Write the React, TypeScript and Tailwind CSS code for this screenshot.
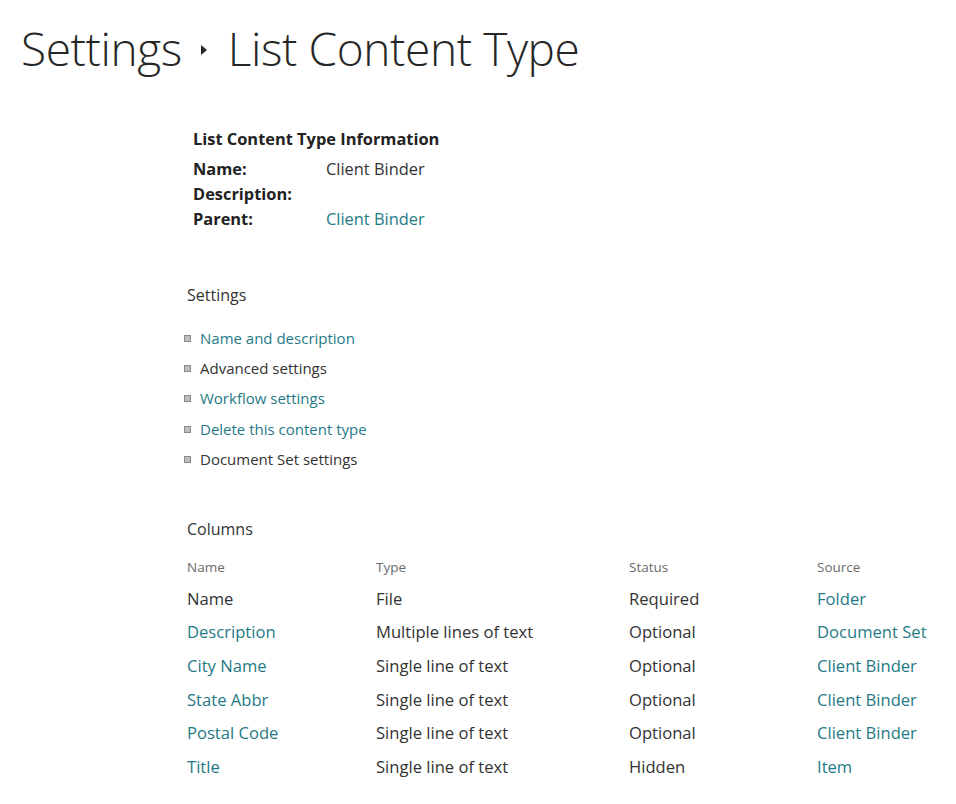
import React from 'react';

const link = 'text-[#1f7a86]';
const dark = 'text-[#333333]';

const settings = [
  { label: 'Name and description', isLink: true },
  { label: 'Advanced settings', isLink: false },
  { label: 'Workflow settings', isLink: true },
  { label: 'Delete this content type', isLink: true },
  { label: 'Document Set settings', isLink: false },
];

const columns = [
  { name: 'Name', nameLink: false, type: 'File', status: 'Required', source: 'Folder' },
  { name: 'Description', nameLink: true, type: 'Multiple lines of text', status: 'Optional', source: 'Document Set' },
  { name: 'City Name', nameLink: true, type: 'Single line of text', status: 'Optional', source: 'Client Binder' },
  { name: 'State Abbr', nameLink: true, type: 'Single line of text', status: 'Optional', source: 'Client Binder' },
  { name: 'Postal Code', nameLink: true, type: 'Single line of text', status: 'Optional', source: 'Client Binder' },
  { name: 'Title', nameLink: true, type: 'Single line of text', status: 'Hidden', source: 'Item' },
];

export default function App() {
  return (
    <div className={`w-[956px] h-[804px] overflow-hidden bg-white ${dark} font-['Open_Sans','Noto_Sans',sans-serif]`}>
      {/* page title */}
      <h1 className="flex items-center pl-[21px] pt-[30px] h-[66px] text-[46px] font-light leading-none tracking-[-0.4px] text-[#262626]">
        <span>Settings</span>
        <span className="ml-[19px] mr-[21px] inline-block w-0 h-0 border-y-[5px] border-y-transparent border-l-[6px] border-l-[#262626] mt-[4px]" />
        <span>List Content Type</span>
      </h1>

      {/* information */}
      <div className="ml-[193px] mt-[62px] text-[16.4px]">
        <div className="font-bold leading-[22px] text-[#222]">List Content Type Information</div>
        <div className="mt-[6px] grid grid-cols-[133px_1fr] leading-[25px]">
          <div className="font-bold text-[#222]">Name:</div>
          <div>Client Binder</div>
          <div className="font-bold text-[#222]">Description:</div>
          <div />
          <div className="font-bold text-[#222]">Parent:</div>
          <div className={link}>Client Binder</div>
        </div>
      </div>

      {/* settings */}
      <div className="ml-[187px] mt-[51px]">
        <div className="text-[16px] leading-[26px]">Settings</div>
        <ul className="mt-[15px] text-[15px]">
          {settings.map((s) => (
            <li key={s.label} className="flex items-center h-[30.3px]">
              <span className="w-[7px] h-[7px] ml-[-3px] mr-[9px] bg-[#bdbdbd] border border-[#8a8a8a]" />
              <span className={s.isLink ? link : dark}>{s.label}</span>
            </li>
          ))}
        </ul>
      </div>

      {/* columns */}
      <div className="ml-[187px] mt-[42px]">
        <div className="text-[16px] leading-[26px]">Columns</div>
        <div className="mt-[10px] grid grid-cols-[189px_253px_188px_1fr] text-[13.5px] text-[#6b6b6b] h-[30px] items-center">
          <div>Name</div>
          <div>Type</div>
          <div>Status</div>
          <div>Source</div>
        </div>
        {columns.map((c) => (
          <div key={c.name} className="grid grid-cols-[189px_253px_188px_1fr] text-[16.6px] h-[33.6px] items-center">
            <div className={c.nameLink ? link : dark}>{c.name}</div>
            <div>{c.type}</div>
            <div>{c.status}</div>
            <div className={link}>{c.source}</div>
          </div>
        ))}
      </div>
    </div>
  );
}
